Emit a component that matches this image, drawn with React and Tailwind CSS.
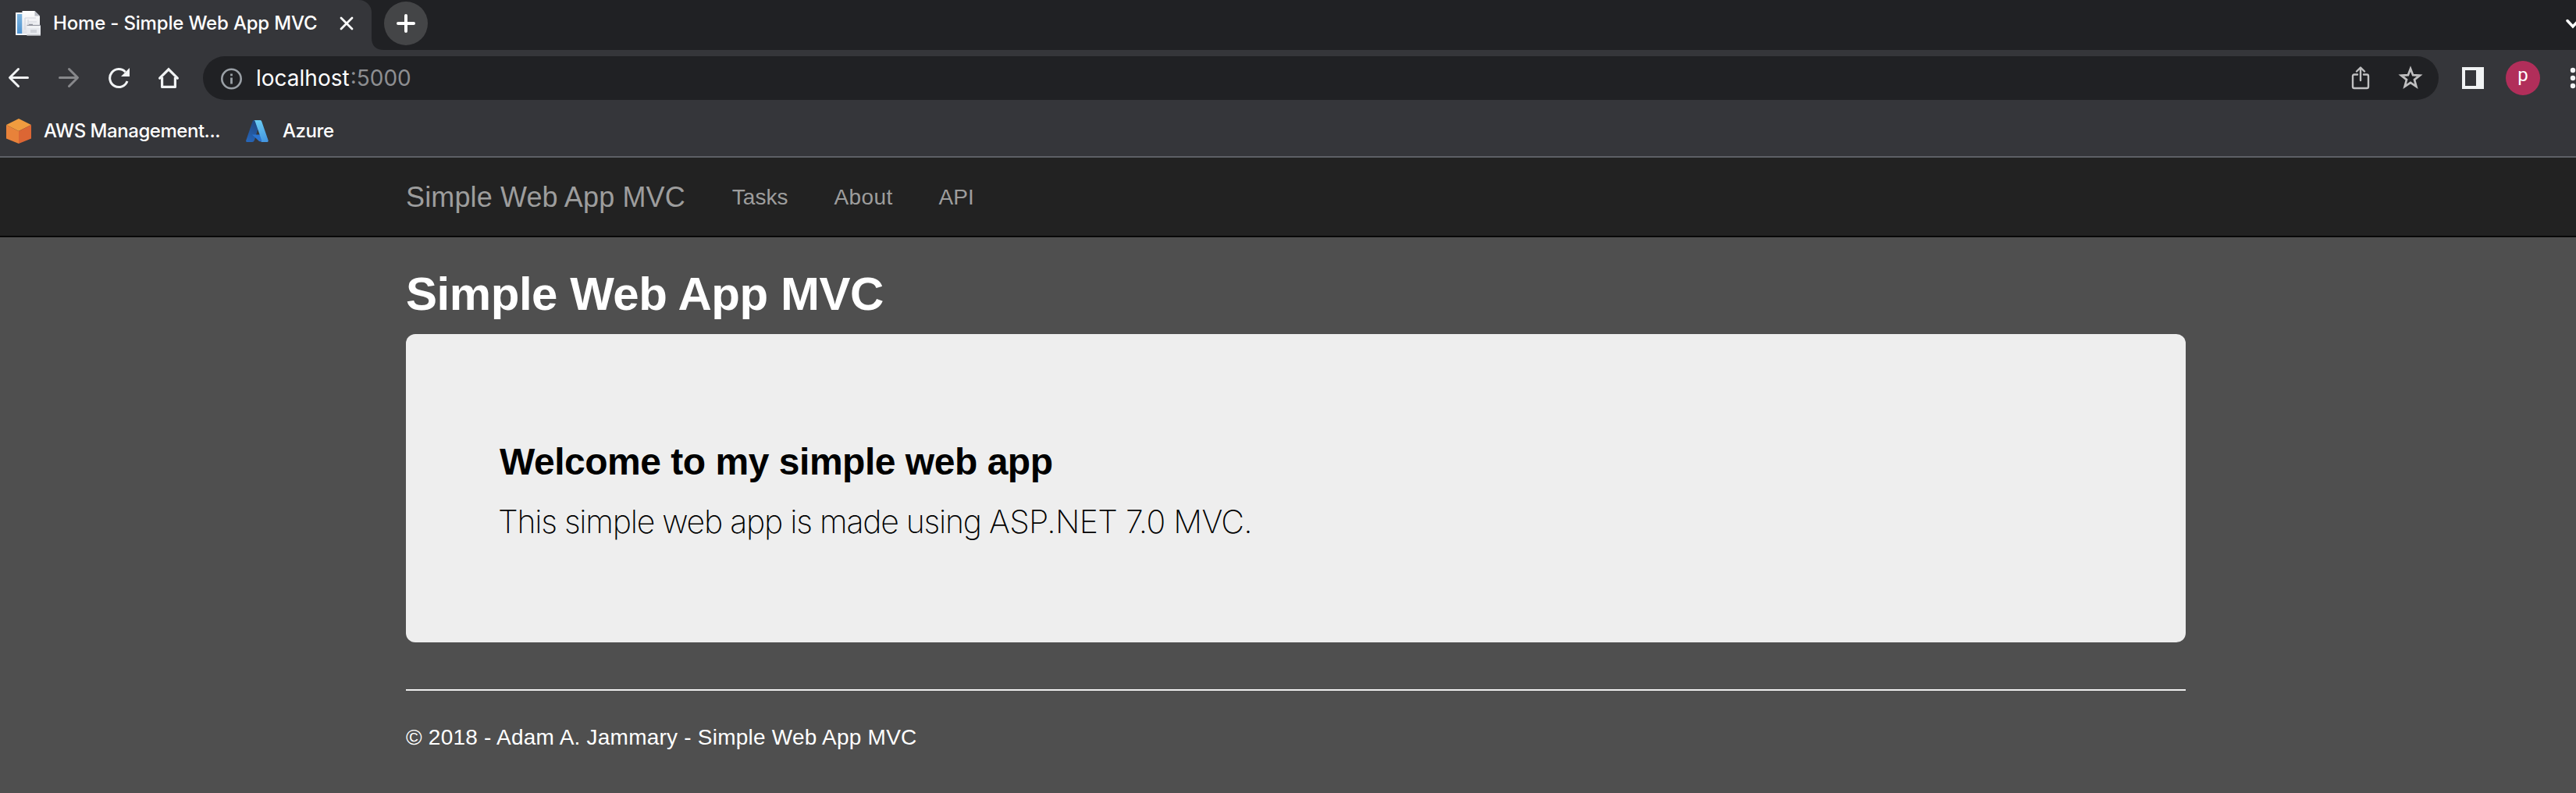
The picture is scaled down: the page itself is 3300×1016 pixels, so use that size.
function PageIcon() {
  return (
    <svg className="size-8 shrink-0" viewBox="0 0 32 32">
      <defs>
        <linearGradient id="sheet" x1="0" y1="0" x2="0" y2="1">
          <stop offset="0" stopColor="#ffffff" />
          <stop offset="1" stopColor="#dfe1e8" />
        </linearGradient>
        <linearGradient id="blueBand" x1="0" y1="0" x2="0" y2="1">
          <stop offset="0" stopColor="#7db4de" />
          <stop offset="1" stopColor="#4f93d0" />
        </linearGradient>
      </defs>
      <rect x="0" y="2" width="22" height="29" fill="#f4f6fa" />
      <rect x="2" y="4" width="6.5" height="25" fill="url(#blueBand)" />
      <path d="M8.5 0H24.5L31 6.5V29H8.5Z" fill="url(#sheet)" />
      <path d="M24.5 0V6.5H31Z" fill="#b9bcc4" />
      <path d="M12 9H26M12 9V24M16 11V22M16 14H27" stroke="#d3d6de" strokeWidth="1.2" fill="none" />
      <path d="M17 17.5H22" stroke="#8f939c" strokeWidth="1.5" />
      <rect x="14.5" y="18" width="17.5" height="13.5" fill="#e9ebf0" />
      <path d="M14.5 18.5H32" stroke="#9a9da6" strokeWidth="1.2" />
      <path d="M15 20.5H31.5" stroke="#ffffff" strokeWidth="1" />
      <path d="M14.5 31H32" stroke="#b2b4ba" strokeWidth="1" />
      <rect x="19" y="24" width="8" height="4" fill="#cfd2d9" />
    </svg>
  );
}

function AwsIcon() {
  return (
    <svg className="size-8 shrink-0" viewBox="0 0 32 32">
      <path d="M16 0L32 8L16 16L0 8Z" fill="#f09c3f" />
      <path d="M0 8L16 16V32L0 25.5Z" fill="#e8823a" />
      <path d="M32 8L16 16V32L32 25.5Z" fill="#dc6634" />
    </svg>
  );
}

function AzureIcon() {
  return (
    <svg className="h-7 w-[29px] shrink-0" viewBox="0 0 29 28">
      <defs>
        <linearGradient id="azLeft" x1="0.6" y1="0" x2="0.2" y2="1">
          <stop offset="0" stopColor="#1f4680" />
          <stop offset="1" stopColor="#2766b8" />
        </linearGradient>
        <linearGradient id="azRight" x1="0.3" y1="0" x2="0.6" y2="1">
          <stop offset="0" stopColor="#6accf3" />
          <stop offset="1" stopColor="#4597e0" />
        </linearGradient>
      </defs>
      <path d="M10.2 0H19L10.8 26Q10 28 8.2 28H1.2Q-0.3 27.5 0.2 26L8.6 1.4Q9.2 0 10.2 0Z" fill="url(#azLeft)" />
      <path d="M8 18.5H20L22 28L17 27Z" fill="#2b74d0" />
      <path d="M10.4 0H18.6Q19.8 0.1 20.2 1.4L28.7 26Q29 27.6 27.6 28H19.2Q20.6 27.4 20.2 26L11.8 1.4Q11.4 0.3 10.4 0Z" fill="url(#azRight)" />
    </svg>
  );
}

function TabStrip() {
  return (
    <div className="flex h-16 bg-[#202124]">
      <div className="flex h-16 w-[476px] items-center rounded-tr-[16px] bg-[#35363a] pb-1 pl-5">
        <PageIcon />
        <span className="ml-4 w-[366px] text-[24px] leading-[30px] font-medium tracking-[-0.18px]">Home - Simple Web App MVC</span>
        <svg className="size-[18px] overflow-visible" viewBox="0 0 18 18" fill="none" stroke="#fff" strokeWidth="2.8" strokeLinecap="round">
          <path d="M3 2L17 16M17 2L3 16" />
        </svg>
      </div>
      <svg className="size-4 self-end" viewBox="0 0 16 16">
        <path d="M0 0Q0 16 16 16H0Z" fill="#35363a" />
      </svg>
      <div className="mt-0.5 flex size-14 items-center justify-center rounded-full bg-[#444547]">
        <svg className="size-6" viewBox="0 0 24 24" fill="none" stroke="#fff" strokeWidth="4" strokeLinecap="round">
          <path d="M12 2V22M2 12H22" />
        </svg>
      </div>
      <svg className="mt-[22px] ml-auto h-4 w-[14px]" viewBox="0 0 14 16" fill="none" stroke="#fff" strokeWidth="3.4" strokeLinecap="round">
        <path d="M3 4.5L10 12L17 4.5" />
      </svg>
    </div>
  );
}

function Toolbar() {
  return (
    <div className="flex h-[72px] items-center pl-[10px]">
      <svg className="size-7" viewBox="0 0 28 28" fill="none" stroke="#f1f3f4" strokeWidth="3" strokeLinecap="round" strokeLinejoin="round">
        <path d="M25.5 13.5H3M13.5 2.5L2.5 13.5L13.5 24.5" />
      </svg>
      <svg className="ml-9 size-7" viewBox="0 0 28 28" fill="none" stroke="#87888b" strokeWidth="3" strokeLinecap="round" strokeLinejoin="round">
        <path d="M2.5 13.5H25M14.5 2.5L25.5 13.5L14.5 24.5" />
      </svg>
      <svg className="ml-9 size-7" viewBox="0 0 28 28" fill="none" stroke="#f1f3f4" strokeWidth="3">
        <path d="M22.6 6.2A11.5 11.5 0 1 0 25 18" strokeLinecap="butt" />
        <path d="M28 1V12H17Z" fill="#f1f3f4" stroke="none" />
      </svg>
      <svg className="ml-9 size-7" viewBox="0 0 28 28" fill="none" stroke="#f1f3f4" strokeWidth="3.2" strokeLinejoin="round" strokeLinecap="round">
        <path d="M2.6 14.2L14 2.8L25.4 14.2" strokeLinejoin="miter" />
        <path d="M5.6 13V25.4H22.4V13" strokeLinecap="butt" />
      </svg>
      <div className="ml-[30px] flex h-14 w-[2864px] items-center rounded-full bg-[#202124] pr-5 pl-[22px]">
        <svg className="size-[29px]" viewBox="0 0 29 29" fill="none">
          <circle cx="14.5" cy="15" r="12.2" stroke="#9aa0a6" strokeWidth="2.6" />
          <path d="M14.5 13.5V21.5M14.5 8.5V11.3" stroke="#9aa0a6" strokeWidth="2.8" />
        </svg>
        <span className="ml-[17px] text-[28px] leading-[34px]">localhost</span>
        <span className="ml-px text-[28px] leading-[34px] text-[#8d8e91]">:5000</span>
        <svg className="ml-auto h-[30px] w-6" viewBox="0 0 24 30" fill="none" stroke="#c0c0c1" strokeWidth="2.4" strokeLinecap="round" strokeLinejoin="round">
          <path d="M8 10.5H4Q2 10.5 2 12.5V26Q2 28 4 28H20Q22 28 22 26V12.5Q22 10.5 20 10.5H16M12 18V3" />
          <path d="M7 6.5L12 1.5L17 6.5" />
        </svg>
        <svg className="ml-9 size-8" viewBox="0 0 32 32" fill="none" stroke="#c0c0c1" strokeWidth="2.7">
          <path d="M16 4L19.1 12.2L27.9 12.6L21 18.1L23.4 26.8L16 21.9L8.6 26.8L11 18.1L4.1 12.6L12.9 12.2Z" strokeMiterlimit="10" />
        </svg>
      </div>
      <svg className="ml-[30px] size-7" viewBox="0 0 28 28">
        <path d="M0 0H28V28H0ZM4 4V24H18V4Z" fillRule="evenodd" fill="#f1f3f4" />
      </svg>
      <div className="ml-7 flex size-11 justify-center rounded-full bg-[#b12e5a] font-['Roboto',sans-serif] text-[24px] leading-[37px]">p</div>
      <svg className="ml-[38px] h-7 w-2" viewBox="0 0 8 28" fill="#f1f3f4">
        <circle cx="4" cy="4" r="3.2" />
        <circle cx="4" cy="14" r="3.2" />
        <circle cx="4" cy="24" r="3.2" />
      </svg>
    </div>
  );
}

function Bookmarks() {
  return (
    <div className="flex h-16 items-center pl-2 text-[24px] leading-[30px] font-medium">
      <AwsIcon />
      <span className="ml-4 w-[259px] tracking-[-0.46px]">AWS Management...</span>
      <AzureIcon />
      <span className="ml-[18px] tracking-[-0.45px]">Azure</span>
    </div>
  );
}

export default function App() {
  return (
    <div className="h-[1016px] w-[3300px] overflow-hidden bg-[#4f4f4f] font-['Liberation_Sans',Arial,sans-serif] whitespace-nowrap text-white">
      <header className="h-[202px] border-b-2 border-[#5d6065] bg-[#35363a] font-['Inter',sans-serif]">
        <TabStrip />
        <Toolbar />
        <Bookmarks />
      </header>
      <nav className="flex h-[102px] items-center border-b-2 border-[#080808] bg-[#222222] pt-0.5 pl-[520px] text-[28px] text-[#9d9d9d]">
        <a className="text-[36px] tracking-[0.13px]">Simple Web App MVC</a>
        <a className="ml-[60px]">Tasks</a>
        <a className="ml-[59px] tracking-[0.4px]">About</a>
        <a className="ml-[59px]">API</a>
      </nav>
      <main className="w-[2800px] pt-10 pl-[520px]">
        <h1 className="text-[60px] leading-[66px] font-bold tracking-[-0.45px]">Simple Web App MVC</h1>
        <section className="mt-[18px] h-[395px] rounded-[12px] bg-[#eeeeee] pt-[138px] pl-[120px] text-black">
          <h2 className="text-[48px] leading-[52px] font-bold tracking-[-0.48px]">Welcome to my simple web app</h2>
          <p className="mt-5 -ml-0.5 font-['Inter',sans-serif] text-[41px] leading-[60px] font-extralight tracking-[-1.25px]">
            This simple web app is made using <span className="tracking-[-0.7px]">ASP.NET 7.0 MVC.</span>
          </p>
        </section>
        <hr className="mt-[60px] h-0.5 border-0 bg-[#eeeeee]" />
        <footer className="mt-10 text-[28px] leading-[40px] tracking-[0.23px]">© 2018 - Adam A. Jammary - Simple Web App MVC</footer>
      </main>
    </div>
  );
}
